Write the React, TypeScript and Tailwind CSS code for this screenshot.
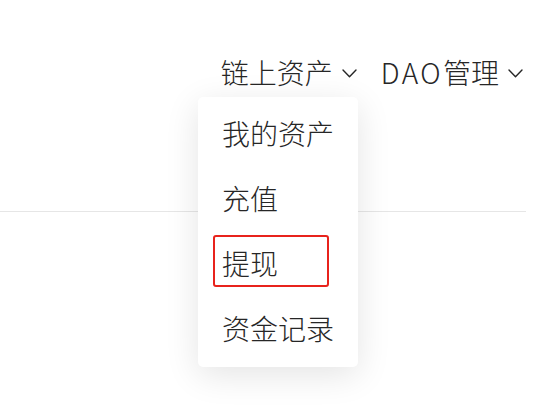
const items = ['我的资产', '充值', '提现', '资金记录']

function Chevron() {
  return (
    <svg width="15" height="9" viewBox="0 0 15 9" fill="none" className="mt-[3px]">
      <polyline points="1,1 7.5,7.8 14,1" stroke="#262626" strokeWidth="1.4" strokeLinecap="round" strokeLinejoin="round" />
    </svg>
  )
}

export default function App() {
  return (
    <div className="w-[540px] h-[414px] bg-white overflow-hidden font-['Noto_Sans_CJK_SC','Noto_Sans',sans-serif] font-light text-[#262626]">
      <div className="relative w-[526px] h-[212px] border-b border-[#e6e6e6]">
        <nav className="flex justify-end items-center gap-[24px] pt-[53px] pr-[3px] text-[28px] leading-[38px]">
          <div className="flex items-center gap-[9px]">
            <span>链上资产</span>
            <Chevron />
          </div>
          <div className="flex items-center gap-[9px]">
            <span>
              <span className="tracking-[2.4px]">DAO</span>管理
            </span>
            <Chevron />
          </div>
        </nav>
      </div>

      {/* dropdown */}
      <div className="absolute left-[198px] top-[97px] w-[160px] bg-white rounded-[5px] shadow-[0_8px_34px_rgba(0,0,0,0.11)] pt-[3px] pb-[7px]">
        {items.map((label) => (
          <div key={label} className="relative h-[65px] flex items-center pl-[24px] text-[28px]">
            {label}
            {label === '提现' && (
              <div className="absolute left-[15px] top-[5px] w-[116px] h-[52px] border-2 border-[#e8231c] rounded-[3px]" />
            )}
          </div>
        ))}
      </div>
    </div>
  )
}
